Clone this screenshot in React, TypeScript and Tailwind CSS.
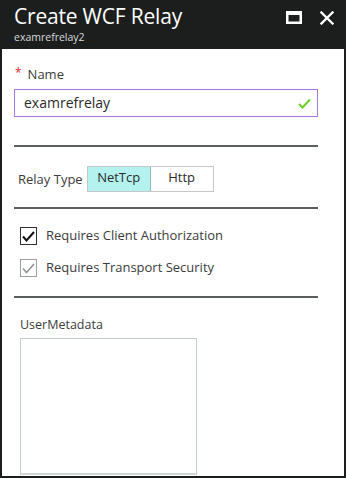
import React from "react";

export default function App() {
  const font = { fontFamily: '"Open Sans", "Noto Sans", sans-serif' };
  return (
    <div className="w-[346px] h-[478px] bg-[#1c1e1e] flex flex-col" style={font}>
      <div className="h-[49px] flex shrink-0 px-[14px]">
        <div className="flex-1 flex flex-col">
          <div className="text-[21px] leading-none text-white mt-[6px] tracking-[-0.2px]">Create WCF Relay</div>
          <div className="text-[10.5px] leading-none text-[#d8dada] mt-[5px]">examrefrelay2</div>
        </div>
        <div className="flex items-start gap-[18px] pt-[11px] pr-[0px]">
          <svg width="16" height="13" viewBox="0 0 16 13">
            <rect x="1.25" y="1.25" width="13.5" height="10.5" fill="none" stroke="white" strokeWidth="2.5" />
            <rect x="1" y="1" width="14" height="3" fill="white" />
          </svg>
          <svg width="14" height="14" viewBox="0 0 14 14" className="mr-[-2px]">
            <path d="M1.5 1.5 L12.5 12.5 M12.5 1.5 L1.5 12.5" stroke="white" strokeWidth="2.3" strokeLinecap="square" />
          </svg>
        </div>
      </div>
      <div className="flex-1 mx-[2px] mb-[2px] bg-white flex flex-col pl-[12px] pr-[26px]">
        <div className="mt-[19px] flex items-center text-[13px] text-[#3b3b3b] leading-none">
          <span className="text-[#e0212b] text-[12px] mr-[6px] ml-[1px] self-start mt-[-1px]">*</span>
          <span>Name</span>
        </div>
        <div className="mt-[8px] h-[28px] border-[1.5px] border-[#a675e6] flex items-center pl-[9px] pr-[6px]">
          <span className="flex-1 text-[14px] text-[#2b2b2b] leading-none">examrefrelay</span>
          <svg width="13" height="11" viewBox="0 0 13 11">
            <path d="M1 6 L4.5 9.5 L12 1.5" fill="none" stroke="#6fcf2a" strokeWidth="2" />
          </svg>
        </div>
        <div className="mt-[28px] h-[2px] bg-[#5a5e5e]" />
        <div className="mt-[19px] flex items-center pl-[4px]">
          <span className="text-[13px] text-[#3b3b3b] leading-none mr-[4px]">Relay Type</span>
          <div className="flex h-[26px] border border-[#c4c8c8]">
            <div className="w-[63px] bg-[#b4f2f0] border-r border-[#8fb9b8] flex items-center justify-center text-[13px] text-[#2b2b2b] pb-[3px]">NetTcp</div>
            <div className="w-[62px] flex items-center justify-center text-[13px] text-[#2b2b2b] pb-[3px]">Http</div>
          </div>
        </div>
        <div className="mt-[15px] h-[2px] bg-[#5a5e5e]" />
        <div className="mt-[18px] flex items-center pl-[6px]">
          <div className="w-[17px] h-[18px] border-[1.5px] border-[#333] flex items-center justify-center">
            <svg width="13" height="11" viewBox="0 0 13 11">
              <path d="M1 5.5 L4.5 9.5 L12 1" fill="none" stroke="#111" strokeWidth="2" />
            </svg>
          </div>
          <span className="ml-[9px] text-[13px] text-[#3b3b3b] leading-none pb-[2px]">Requires Client Authorization</span>
        </div>
        <div className="mt-[14px] flex items-center pl-[6px]">
          <div className="w-[17px] h-[18px] border-[1.5px] border-[#9aa0a0] flex items-center justify-center">
            <svg width="13" height="11" viewBox="0 0 13 11">
              <path d="M1 5.5 L4.5 9.5 L12 1" fill="none" stroke="#8e9494" strokeWidth="1.6" />
            </svg>
          </div>
          <span className="ml-[9px] text-[13px] text-[#3b3b3b] leading-none pb-[2px]">Requires Transport Security</span>
        </div>
        <div className="mt-[19px] h-[2px] bg-[#5a5e5e]" />
        <div className="mt-[21px] pl-[6px] text-[12.5px] text-[#3b3b3b] leading-none">UserMetadata</div>
        <div className="mt-[6px] ml-[6px] w-[177px] flex-1 border border-[#c4cccc] border-b-[2px] border-b-[#cfd6d6] mb-[1px]" />
      </div>
    </div>
  );
}
